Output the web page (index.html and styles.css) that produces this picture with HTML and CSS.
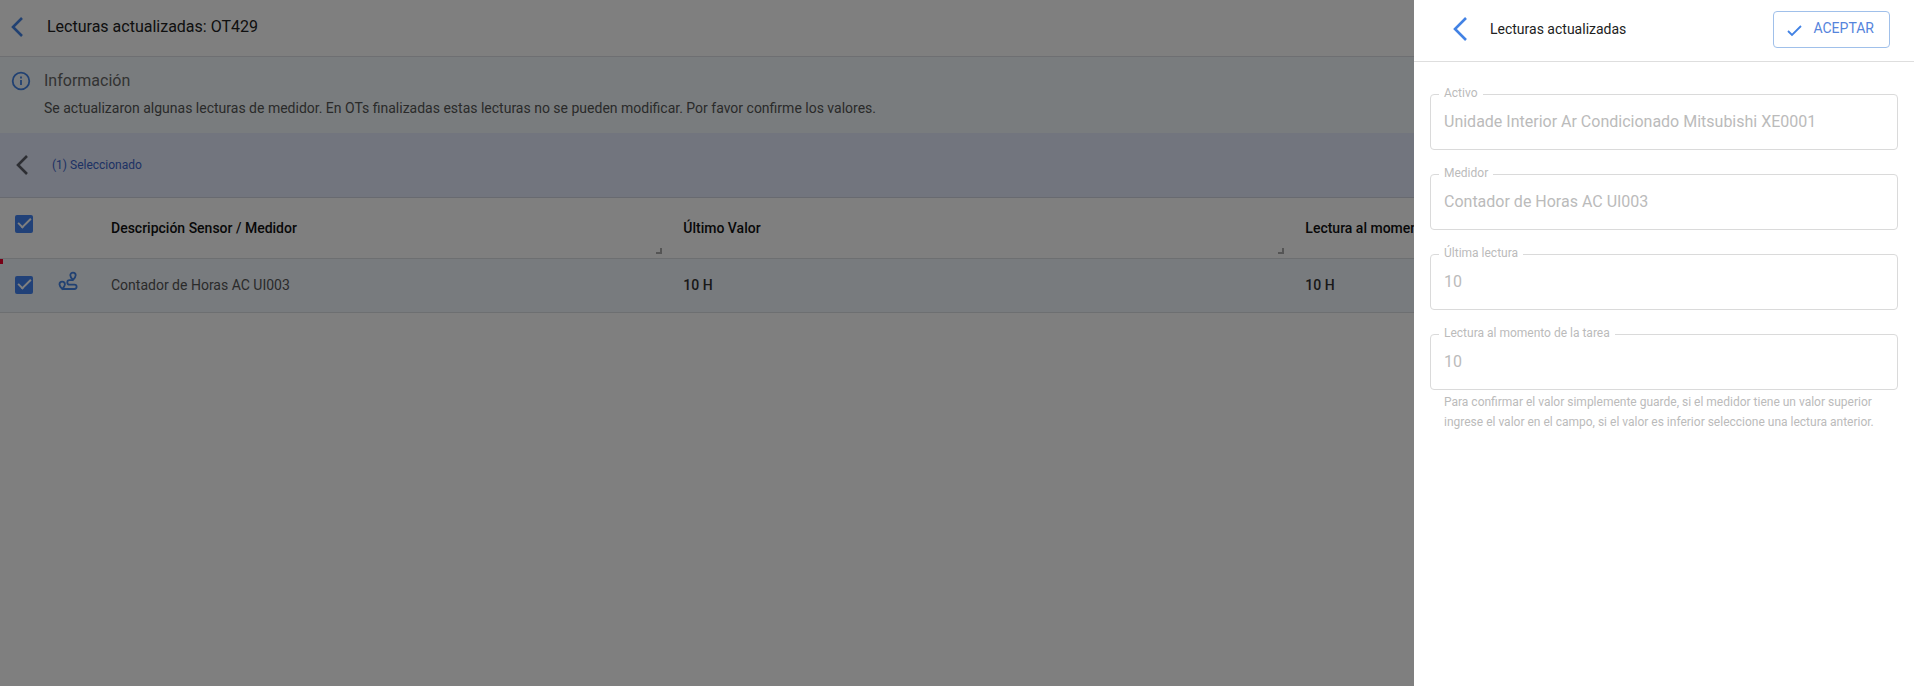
FILE: index.html
```html
<!DOCTYPE html>
<html lang="es">
<head>
    <meta charset="UTF-8">
    <meta name="viewport" content="width=device-width, initial-scale=1.0">
    <title>Lecturas actualizadas: OT429</title>
    <link rel="stylesheet" href="styles.css">
</head>
<body>
    <main class="page">
        <header class="page-header">
            <button class="icon-button" type="button" aria-label="Volver">
                <svg width="12" height="20" viewBox="0 0 12 20"><path d="M11 1 2 10l9 9" /></svg>
            </button>
            <h1>Lecturas actualizadas: OT429</h1>
        </header>

        <section class="info">
            <svg class="info-icon" width="20" height="20" viewBox="0 0 20 20">
                <circle cx="10" cy="10" r="8.3" />
                <path d="M10 9v5M10 5.6v1.8" />
            </svg>
            <div>
                <h2>Información</h2>
                <p>Se actualizaron algunas lecturas de medidor. En OTs finalizadas estas lecturas no se pueden modificar. Por favor confirme los valores.</p>
            </div>
        </section>

        <div class="selection-bar">
            <button class="icon-button dark" type="button" aria-label="Quitar selección">
                <svg width="12" height="20" viewBox="0 0 12 20"><path d="M11 1 2 10l9 9" /></svg>
            </button>
            <span>(1) Seleccionado</span>
        </div>

        <table class="readings">
            <colgroup>
                <col class="col-check">
                <col class="col-icon">
                <col class="col-name">
                <col class="col-value">
                <col>
            </colgroup>
            <thead>
                <tr>
                    <th class="check"><input type="checkbox" aria-label="Seleccionar todo" checked></th>
                    <th></th>
                    <th class="resizable">Descripción Sensor / Medidor</th>
                    <th class="resizable">Último Valor</th>
                    <th>Lectura al momento de la tarea</th>
                </tr>
            </thead>
            <tbody>
                <tr>
                    <td class="check marked"><input type="checkbox" aria-label="Seleccionar Contador de Horas AC UI003" checked></td>
                    <td class="type">
                        <svg width="20" height="20" viewBox="0 0 20 20">
                            <path d="M15 9c-1.700-1.900-2.700-3.300-2.700-4.700a2.700 2.700 0 0 1 5.400 0c0 1.400-1 2.800-2.700 4.700z" />
                            <path d="M4.200 18c-1.700-1.900-2.700-3.300-2.700-4.600a2.700 2.700 0 0 1 5.400 0c0 1.300-1 2.700-2.700 4.600z" />
                            <path d="M4.200 18h12.200a2.200 2.200 0 0 0 0-4.400h-4.900a2.200 2.200 0 0 1 0-4.400H15" />
                        </svg>
                    </td>
                    <td>Contador de Horas AC UI003</td>
                    <td class="value">10 H</td>
                    <td class="value">10 H</td>
                </tr>
            </tbody>
        </table>
    </main>

    <div class="overlay"></div>

    <aside class="drawer">
        <header class="drawer-header">
            <button class="icon-button" type="button" aria-label="Cerrar">
                <svg width="15" height="26" viewBox="0 0 15 26"><path d="M14 2 3 13l11 11" /></svg>
            </button>
            <h2>Lecturas actualizadas</h2>
            <button class="accept" type="button">
                <svg width="16" height="14" viewBox="0 0 16 14"><path d="m1 8 4 4L14 3" /></svg>
                ACEPTAR
            </button>
        </header>

        <form class="drawer-form">
            <div class="field">
                <label for="activo">Activo</label>
                <input id="activo" type="text" value="Unidade Interior Ar Condicionado Mitsubishi XE0001" disabled>
            </div>
            <div class="field">
                <label for="medidor">Medidor</label>
                <input id="medidor" type="text" value="Contador de Horas AC UI003" disabled>
            </div>
            <div class="field">
                <label for="ultima">Última lectura</label>
                <input id="ultima" type="text" value="10" disabled>
            </div>
            <div class="field">
                <label for="lectura">Lectura al momento de la tarea</label>
                <input id="lectura" type="text" value="10" aria-describedby="ayuda" disabled>
            </div>
            <p class="hint" id="ayuda">Para confirmar el valor simplemente guarde, si el medidor tiene un valor superior ingrese el valor en el campo, si el valor es inferior seleccione una lectura anterior.</p>
        </form>
    </aside>
</body>
</html>
```
FILE: styles.css
```css
*,
*::before,
*::after {
    box-sizing: border-box;
}

body {
    margin: 0;
    font-family: Roboto, Arial, sans-serif;
    font-size: 14px;
    background-color: #fff;
    overflow: hidden;
}

h1, h2, p {
    margin: 0;
    font-weight: 400;
}

svg {
    display: block;
    fill: none;
    stroke: #4282e4;
    stroke-width: 1.8;
    flex-shrink: 0;
}

button {
    font-family: inherit;
    cursor: pointer;
}

.icon-button {
    padding: 0;
    border: none;
    background: none;
}

.icon-button svg {
    stroke-width: 2.6;
}

.icon-button.dark svg {
    stroke: #5a5d66;
}

/* Page */
.page-header {
    display: flex;
    align-items: center;
    gap: 24px;
    height: 57px;
    padding: 0 11px 3px;
    border-bottom: 1px solid #dcdfe4;
}

.page-header h1 {
    font-size: 16px;
    color: #212121;
}

.info {
    display: flex;
    gap: 13px;
    padding: 12px 11px 14px;
    background-color: #f2f9fc;
}

.info-icon {
    margin-top: 2px;
}

.info h2 {
    font-size: 16px;
    line-height: 24px;
    color: #666;
}

.info p {
    margin-top: 4px;
    font-size: 14px;
    line-height: 22px;
    color: #555;
}

.selection-bar {
    display: flex;
    align-items: center;
    gap: 24px;
    height: 65px;
    padding: 0 16px;
    background-color: #e4eafc;
    border-bottom: 1px solid #d0d4e0;
    font-size: 12px;
    color: #3c64c8;
}

.readings {
    width: 100%;
    table-layout: fixed;
    border-collapse: collapse;
}

.col-check {
    width: 48px;
}

.col-icon {
    width: 43px;
}

.col-name {
    width: 29.9%;
}

.col-value {
    width: 32.5%;
}

.readings th,
.readings td {
    padding: 0 20px;
    text-align: left;
    white-space: nowrap;
    border-bottom: 1px solid #dadee2;
}

.readings th {
    position: relative;
    height: 60px;
    font-weight: 500;
    color: #111;
}

.readings td {
    position: relative;
    height: 54px;
    color: #555;
    background-color: #f0f6fd;
}

.readings td.value {
    font-weight: 500;
    color: #333;
}

.readings .check {
    padding: 0 0 0 15px;
}

.readings th.check {
    padding-bottom: 8px;
}

.readings .type {
    padding: 0 0 8px 10px;
}

/* corner handle used to resize a column */
.resizable::after {
    content: "";
    position: absolute;
    right: 1px;
    bottom: 4px;
    width: 6px;
    height: 6px;
    border-right: 2px solid #aaa;
    border-bottom: 2px solid #aaa;
}

/* red mark of an edited row */
.marked::before {
    content: "";
    position: absolute;
    top: 0;
    left: 0;
    width: 3px;
    height: 5px;
    background-color: #f0002c;
}

input[type="checkbox"] {
    appearance: none;
    display: block;
    width: 18px;
    height: 18px;
    margin: 0;
    border: 2px solid #777;
    border-radius: 2px;
}

input[type="checkbox"]:checked {
    border: none;
    background-color: #4282f0;
}

input[type="checkbox"]:checked::after {
    content: "";
    display: block;
    width: 7px;
    height: 13px;
    margin: 0 auto;
    border-right: 2px solid #fff;
    border-bottom: 2px solid #fff;
    transform: rotate(45deg);
}

/* Drawer */
.overlay {
    position: fixed;
    inset: 0;
    background-color: rgba(0, 0, 0, 0.5);
}

.drawer {
    position: fixed;
    top: 0;
    right: 0;
    bottom: 0;
    width: 500px;
    max-width: 100%;
    background-color: #fff;
}

.drawer-header {
    display: flex;
    align-items: center;
    height: 62px;
    padding: 0 24px 3px 38px;
    border-bottom: 1px solid #dedede;
}

.drawer-header h2 {
    margin-left: 23px;
    font-size: 14px;
    color: #212121;
}

.accept {
    display: flex;
    align-items: center;
    gap: 10px;
    height: 37px;
    margin-left: auto;
    padding: 0 15px 3px 13px;
    border: 1px solid #a0c0ea;
    border-radius: 4px;
    background-color: #fff;
    font-size: 14px;
    color: #5584dc;
}

.accept svg {
    margin-top: 4px;
}

.drawer-form {
    display: flex;
    flex-direction: column;
    gap: 24px;
    padding: 32px 16px;
}

.field {
    position: relative;
}

.field label {
    position: absolute;
    top: -8px;
    left: 9px;
    padding: 0 5px;
    font-size: 12px;
    line-height: 14px;
    color: #bbb;
    background-color: #fff;
}

.field input {
    display: block;
    width: 100%;
    height: 56px;
    padding: 0 13px 2px;
    border: 1px solid #dadada;
    border-radius: 4px;
    background-color: #fff;
    font-family: inherit;
    font-size: 16px;
    color: #bbb;
}

.hint {
    margin-top: -22px;
    padding: 0 14px;
    font-size: 12px;
    line-height: 20px;
    color: #bbb;
}
```
